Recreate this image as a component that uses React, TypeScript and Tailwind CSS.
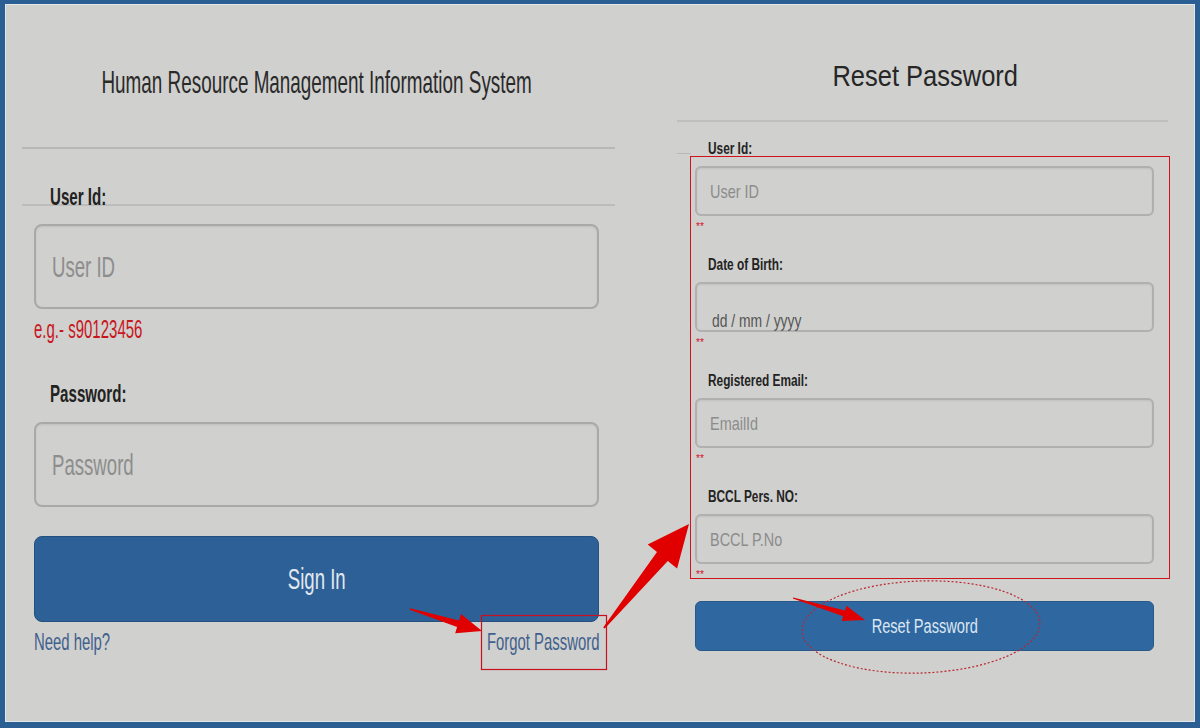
const leftFields = [
  { label: "User Id:", placeholder: "User ID" },
  { label: "Password:", placeholder: "Password" },
];

const resetFields = [
  { label: "Date of Birth:", placeholder: "dd / mm / yyyy", date: true },
  { label: "Registered Email:", placeholder: "EmailId" },
  { label: "BCCL Pers. NO:", placeholder: "BCCL P.No" },
];

function BigInput({ placeholder }: { placeholder: string }) {
  return (
    <div className="ml-[12px] flex h-[85px] w-[565px] items-center rounded-[8px] border-2 border-[#a9a9a9] px-[16px] text-[30px] leading-none text-[#8d8d8d] shadow-[inset_0_1px_2px_rgba(0,0,0,0.08)]">
      <span className="inline-block origin-left scale-x-[0.62] whitespace-nowrap">{placeholder}</span>
    </div>
  );
}

function SmallInput({ placeholder, date }: { placeholder: string; date?: boolean }) {
  return (
    <div
      className={`flex h-[50px] w-[459px] rounded-[6px] border-2 border-[#b0b0b0] pl-[13px] text-[19px] leading-none shadow-[inset_0_1px_2px_rgba(0,0,0,0.07)] ${
        date ? "items-start pt-[27px] pl-[15px] text-[#555555]" : "items-center text-[#8c8c8c]"
      }`}
    >
      <span className={`inline-block origin-left whitespace-nowrap ${date ? "scale-x-[0.73]" : "scale-x-[0.76]"}`}>
        {placeholder}
      </span>
    </div>
  );
}

function Stars({ last }: { last?: boolean }) {
  return (
    <div className={`${last ? "h-[14px]" : "h-[41px]"} pl-[1px] pt-[6px] text-[10px] leading-none text-[#d0121b]`}>
      **
    </div>
  );
}

function SmallLabel({ text }: { text: string }) {
  return (
    <div className="mb-[9px] h-[16px] pl-[13px] text-[16px] font-bold leading-none text-[#232323]">
      <span className="inline-block origin-left scale-x-[0.74] whitespace-nowrap">{text}</span>
    </div>
  );
}

export default function App() {
  return (
    <div className="relative h-[728px] w-[1200px] overflow-hidden border-x-[5px] border-t-[4px] border-b-[6px] border-[#2b5f93] bg-[#d0d0ce] font-['Liberation_Sans',Arial,sans-serif]">
      <div className="flex h-full border border-[#e2e7ec]">
        {/* login panel */}
        <div className="ml-[16px] w-[593px] pt-[61px]">
          <div className="flex h-[32px] justify-center pr-[4px] text-[32px] leading-none text-[#2a2a2a]">
            <span className="inline-block scale-x-[0.59] whitespace-nowrap">
              Human Resource Management Information System
            </span>
          </div>
          <div className="mt-[49px] h-[2px] bg-[#b7b7b7]" />

          <div className="mt-[36px] h-[19px] pl-[28px] text-[24px] font-bold leading-none text-[#222222]">
            <span className="inline-block origin-left scale-x-[0.63] whitespace-nowrap">{leftFields[0].label}</span>
          </div>
          <div className="h-[2px] bg-[#bcbcbc]" />
          <div className="mt-[18px]">
            <BigInput placeholder={leftFields[0].placeholder} />
          </div>
          <div className="mt-[8px] h-[25px] pl-[12px] text-[25px] leading-none text-[#c8161d]">
            <span className="inline-block origin-left scale-x-[0.6] whitespace-nowrap">e.g.- s90123456</span>
          </div>

          <div className="mt-[40px] h-[24px] pl-[28px] text-[24px] font-bold leading-none text-[#222222]">
            <span className="inline-block origin-left scale-x-[0.63] whitespace-nowrap">{leftFields[1].label}</span>
          </div>
          <div className="mt-[16px]">
            <BigInput placeholder={leftFields[1].placeholder} />
          </div>

          <div className="ml-[12px] mt-[29px] flex h-[86px] w-[565px] items-center justify-center rounded-[8px] border border-[#23507e] bg-[#2d6096] text-[30px] leading-none text-[#e1e8f0]">
            <span className="inline-block scale-x-[0.62] whitespace-nowrap">Sign In</span>
          </div>

          <div className="ml-[12px] mt-[8px] flex w-[565px] justify-between text-[24px] leading-none text-[#40608d]">
            <span className="inline-block origin-left scale-x-[0.62] whitespace-nowrap">Need help?</span>
            <span className="inline-block origin-right scale-x-[0.62] whitespace-nowrap">Forgot Password</span>
          </div>
        </div>

        {/* reset panel */}
        <div className="ml-[62px] w-[491px] pt-[56px]">
          <div className="flex h-[30px] justify-center pl-[6px] text-[30px] leading-none text-[#262626]">
            <span className="inline-block scale-x-[0.85] whitespace-nowrap">Reset Password</span>
          </div>
          <div className="mt-[29px] h-[2px] bg-[#bfbfbf]" />

          <div className="relative mt-[19px] h-[15px] pl-[31px] text-[16px] font-bold leading-none text-[#232323]">
            <span className="inline-block origin-left scale-x-[0.74] whitespace-nowrap">User Id:</span>
            <div className="absolute left-0 top-[12px] h-[1px] w-[14px] bg-[#b9b9b9]" />
          </div>

          <div className="ml-[13px] w-[480px] border border-[#d0121b] pl-[4px] pt-[9px]">
            <SmallInput placeholder="User ID" />
            <Stars />
            {resetFields.map((f, i) => (
              <div key={f.label}>
                <SmallLabel text={f.label} />
                <SmallInput placeholder={f.placeholder} date={f.date} />
                <Stars last={i === resetFields.length - 1} />
              </div>
            ))}
          </div>

          <div className="ml-[18px] mt-[22px] flex h-[50px] w-[459px] items-center justify-center rounded-[6px] border border-[#29598a] bg-[#2f68a1] text-[20px] leading-none text-[#dce6f1]">
            <span className="inline-block scale-x-[0.73] whitespace-nowrap">Reset Password</span>
          </div>
        </div>
      </div>

      {/* annotations */}
      <svg
        className="pointer-events-none absolute left-[-5px] top-[-4px] h-[728px] w-[1200px]"
        viewBox="0 0 1200 728"
      >
        <rect x="481.5" y="615.5" width="125" height="54" fill="none" stroke="#c8101e" strokeWidth="1.2" />
        <polygon
          points="410.2,608.3 459.1,620.4 461,614.1 482,631 455.2,633.3 457.1,627.1 409.8,609.7"
          fill="#e00000"
        />
        <polygon
          points="604.8,628.6 667.8,560.9 677.1,568.5 689,524 647.7,544.5 657,552.1 603.2,627.4"
          fill="#e00000"
        />
        <polygon
          points="793.2,597.4 845,610.4 846.5,605.7 865,620 841.7,620.9 843.2,616.2 792.8,598.6"
          fill="#e00000"
        />
        <ellipse
          cx="921"
          cy="627"
          rx="119"
          ry="46"
          fill="none"
          stroke="#b8262e"
          strokeWidth="1.2"
          strokeDasharray="2 2"
          transform="rotate(-2 921 627)"
        />
      </svg>
    </div>
  );
}
